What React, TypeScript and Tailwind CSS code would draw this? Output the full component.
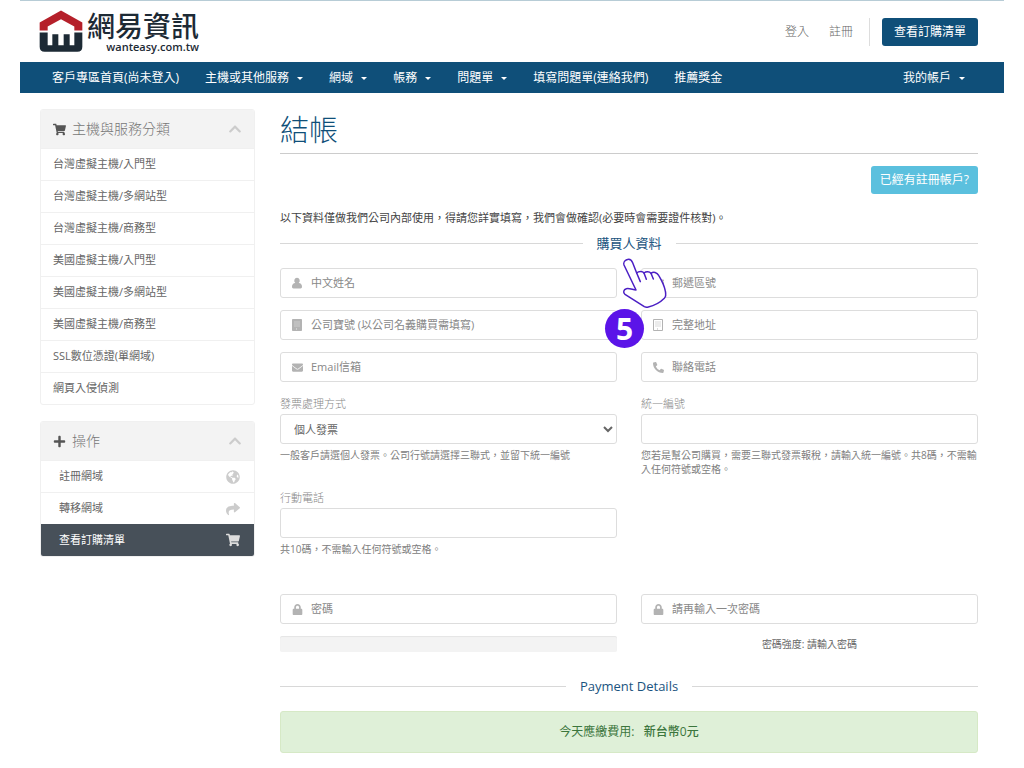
import type { ReactNode } from "react";
import {
  FaChevronUp,
  FaEnvelope,
  FaGlobeAmericas,
  FaLock,
  FaPhoneAlt,
  FaPlus,
  FaShare,
  FaShoppingCart,
} from "react-icons/fa";

const navItems = [
  { label: "客戶專區首頁(尚未登入)", menu: false },
  { label: "主機或其他服務", menu: true },
  { label: "網域", menu: true },
  { label: "帳務", menu: true },
  { label: "問題單", menu: true },
  { label: "填寫問題單(連絡我們)", menu: false },
  { label: "推薦獎金", menu: false },
];

const categories = [
  "台灣虛擬主機/入門型",
  "台灣虛擬主機/多網站型",
  "台灣虛擬主機/商務型",
  "美國虛擬主機/入門型",
  "美國虛擬主機/多網站型",
  "美國虛擬主機/商務型",
  "SSL數位憑證(單網域)",
  "網頁入侵偵測",
];

const actions = [
  { label: "註冊網域", icon: <FaGlobeAmericas />, active: false },
  { label: "轉移網域", icon: <FaShare />, active: false },
  { label: "查看訂購清單", icon: <FaShoppingCart />, active: true },
];

function UserIcon() {
  return (
    <svg viewBox="0 0 12 12" className="h-3 w-3" fill="currentColor">
      <path d="M6 .8a2.700 2.900 0 0 1 1.700 5.200c2.300.1 3.300 1.700 3.300 3.800 0 1-.6 1.600-1.500 1.600h-7c-.9 0-1.500-.6-1.500-1.600 0-2.100 1-3.700 3.300-3.800A2.700 2.900 0 0 1 6 .8z" />
    </svg>
  );
}

function BuildingIcon({ outline = false }: { outline?: boolean }) {
  return (
    <svg viewBox="0 0 12 12" className="h-3 w-3">
      <path
        d="M1.500.5h9v11h-9z"
        fill={outline ? "none" : "currentColor"}
        stroke="currentColor"
      />
      <path
        d="M3.500 3h5M3.500 5h5M3.500 7h5M5 10h2"
        stroke={outline ? "currentColor" : "#e8e8e8"}
        strokeDasharray="1 1"
      />
    </svg>
  );
}

function LogoMark() {
  return (
    <svg viewBox="0 0 132 128" className="h-[43px] w-11" aria-hidden="true">
      <path d="M2 37 66 1l64 36v24h-24V49L66 27 26 49v12H2z" fill="#b5202a" />
      <path
        d="M2 67h24v38h14V72h18v33h16V72h18v33h14V67h24v43q0 15-15 15H17q-15 0-15-15z"
        fill="#1d2a35"
      />
    </svg>
  );
}

function PointingHand() {
  return (
    <svg viewBox="60 10 144 156" className="h-[52px] w-12" aria-hidden="true">
      <path
        d="M105 109 69 34C64 20 87 8 95 27l12 31c6-6 18-6 22 0 6-5 16-5 21 1 7-6 18-3 23 6 9 15 17 31 20 47 2 9 2 17-3 22-14 14-29 22-48 26-4 1-8 1-12-1L72 122c-7-5-4-15 4-17 9-2 19 3 29 4z"
        fill="#fff"
        stroke="#4b1fc4"
        strokeWidth="4.500"
        strokeLinejoin="round"
      />
      <path
        d="m107 58 11 26M129 58l7 19M150 59l7 17"
        fill="none"
        stroke="#4b1fc4"
        strokeWidth="4.500"
        strokeLinecap="round"
      />
    </svg>
  );
}

function Caret() {
  return (
    <span className="ml-2 inline-block border-x-[3px] border-t-[3px] border-x-transparent border-t-white align-middle" />
  );
}

function PanelHeader({ icon, title }: { icon: ReactNode; title: string }) {
  return (
    <div className="flex h-[38px] items-center bg-[#f3f3f3] px-3 text-sm font-light text-[#777]">
      <span className="mr-1.5 text-[13px] text-[#555]">{icon}</span>
      <h3>{title}</h3>
      <button type="button" aria-label="收合" className="ml-auto text-[#ccc]">
        <FaChevronUp />
      </button>
    </div>
  );
}

function IconField({
  icon,
  label,
  type = "text",
}: {
  icon: ReactNode;
  label: string;
  type?: string;
}) {
  return (
    <label className="flex h-[30px] items-center gap-2 rounded-[3px] border border-[#ddd] bg-white pl-2.5">
      <span className="flex w-3 justify-center text-[11px] text-[#b3b3b3]">{icon}</span>
      <input
        type={type}
        aria-label={label}
        placeholder={label}
        className="min-w-0 flex-1 text-[11px] outline-none placeholder:text-[#888]"
      />
    </label>
  );
}

function TextField({ id, label, help }: { id: string; label: string; help: string }) {
  return (
    <div>
      <label htmlFor={id} className="block leading-5 font-light text-[#888]">
        {label}
      </label>
      <input
        id={id}
        type="text"
        className="block h-[30px] w-full rounded-[3px] border border-[#ddd] bg-white px-3"
      />
      <p className="mt-1 text-[10px] leading-[14px] text-[#808080]">{help}</p>
    </div>
  );
}

function SectionTitle({ children }: { children: ReactNode }) {
  return (
    <div className="flex items-center gap-3.5 text-[#1a5480]">
      <span className="h-px flex-1 bg-[#d8d8d8]" />
      <h2 className="text-[13px] leading-5">{children}</h2>
      <span className="h-px flex-1 bg-[#d8d8d8]" />
    </div>
  );
}

export default function App() {
  return (
    <div
      lang="zh-Hant"
      className="mx-5 min-h-screen border-t border-[#b7ccd6] bg-white font-['Open_Sans','Noto_Sans_CJK_TC',sans-serif] text-[11px] text-[#666]"
    >
      <header className="flex h-[61px] items-center justify-between pr-[26px] pl-[19px]">
        <a href="#" className="flex items-center gap-1 text-[#1d2a35]">
          <LogoMark />
          <span className="flex flex-col items-end">
            <span className="text-[28px] leading-[30px] font-medium">網易資訊</span>
            <span className="text-[11px] leading-3 font-semibold">wanteasy.com.tw</span>
          </span>
        </a>
        <div className="flex items-center text-xs font-light text-[#666]">
          <a href="#">登入</a>
          <a href="#" className="ml-5">
            註冊
          </a>
          <span className="mx-3 ml-4 h-7 w-px bg-[#ddd]" />
          <a
            href="#"
            className="rounded-[3px] bg-[#0f4f79] px-3 leading-7 font-normal text-white"
          >
            查看訂購清單
          </a>
        </div>
      </header>

      <nav className="flex h-[31px] items-center bg-[#0f4f79] pr-[26px] pl-[19px] text-xs text-white">
        {navItems.map((item) =>
          item.menu ? (
            <button key={item.label} type="button" className="px-[13px]">
              {item.label}
              <Caret />
            </button>
          ) : (
            <a key={item.label} href="#" className="px-[13px]">
              {item.label}
            </a>
          )
        )}
        <button type="button" className="ml-auto px-[13px]">
          我的帳戶
          <Caret />
        </button>
      </nav>

      <div className="flex gap-[25px] pt-4 pr-[26px] pl-5">
        <aside className="w-[215px] shrink-0 space-y-4">
          <section className="overflow-hidden rounded-[3px] border border-[#f0f0f0]">
            <PanelHeader icon={<FaShoppingCart />} title="主機與服務分類" />
            <ul>
              {categories.map((name) => (
                <li key={name} className="h-8 border-t border-[#f0f0f0] px-3 leading-[30px]">
                  <a href="#">{name}</a>
                </li>
              ))}
            </ul>
          </section>
          <section className="overflow-hidden rounded-[3px] border border-[#f0f0f0]">
            <PanelHeader icon={<FaPlus />} title="操作" />
            <ul>
              {actions.map((action) => (
                <li key={action.label}>
                  <a
                    href="#"
                    className={
                      action.active
                        ? "flex h-8 items-center justify-between bg-[#475059] pr-3.5 pl-[18px] text-white"
                        : "flex h-8 items-center justify-between border-t border-[#f0f0f0] pr-3.5 pl-[18px]"
                    }
                  >
                    {action.label}
                    <span
                      className={
                        action.active ? "text-sm text-[#ddd]" : "text-sm text-[#ccc]"
                      }
                    >
                      {action.icon}
                    </span>
                  </a>
                </li>
              ))}
            </ul>
          </section>
        </aside>

        <main className="min-w-0 flex-1">
          <h1 className="border-b border-[#ccc] pt-px pb-[3px] text-[29px] leading-10 font-light text-[#0f4f79]">
            結帳
          </h1>

          <div className="mt-3 flex justify-end">
            <button
              type="button"
              className="h-7 rounded-[3px] bg-[#5bc0de] px-[9px] text-xs text-white"
            >
              已經有註冊帳戶?
            </button>
          </div>

          <p className="mt-3.5 leading-5 text-[#444]">
            以下資料僅做我們公司內部使用，得請您詳實填寫，我們會做確認(必要時會需要證件核對)。
          </p>

          <form className="relative mt-[5px]">
            <SectionTitle>購買人資料</SectionTitle>

            <div className="mt-[15px] grid grid-cols-2 gap-x-6 gap-y-3">
              <IconField icon={<UserIcon />} label="中文姓名" />
              <IconField icon={<FaEnvelope />} label="郵遞區號" />
              <IconField icon={<BuildingIcon />} label="公司寶號 (以公司名義購買需填寫)" />
              <IconField icon={<BuildingIcon outline />} label="完整地址" />
              <IconField icon={<FaEnvelope />} label="Email信箱" type="email" />
              <IconField icon={<FaPhoneAlt />} label="聯絡電話" type="tel" />

              <div>
                <label htmlFor="invoice" className="block leading-5 font-light text-[#888]">
                  發票處理方式
                </label>
                <select
                  id="invoice"
                  className="block h-[30px] w-full rounded-[3px] border border-[#ddd] bg-white pl-[9px]"
                >
                  <option>個人發票</option>
                  <option>公司行號</option>
                </select>
                <p className="mt-1 text-[10px] leading-[14px] text-[#808080]">
                  一般客戶請選個人發票。公司行號請選擇三聯式，並留下統一編號
                </p>
              </div>
              <TextField
                id="tax-id"
                label="統一編號"
                help="您若是幫公司購買，需要三聯式發票報稅，請輸入統一編號。共8碼，不需輸入任何符號或空格。"
              />
              <TextField
                id="mobile"
                label="行動電話"
                help="共10碼，不需輸入任何符號或空格。"
              />
            </div>

            <div className="mt-[38px] grid grid-cols-2 gap-x-6 gap-y-3">
              <IconField icon={<FaLock />} label="密碼" type="password" />
              <IconField icon={<FaLock />} label="請再輸入一次密碼" type="password" />
              <div className="h-4 rounded-[2px] bg-[#f3f3f3] shadow-[inset_0_1px_1px_rgba(0,0,0,0.06)]" />
              <p className="text-center text-[10px] leading-4">密碼強度: 請輸入密碼</p>
            </div>

            {/* step marker */}
            <div className="pointer-events-none absolute top-6 left-1/2 -ml-2">
              <PointingHand />
            </div>
            <div className="pointer-events-none absolute top-[76px] left-1/2 -ml-6 flex h-[39px] w-[39px] items-center justify-center rounded-full bg-[#5b14e8] text-[30px] leading-none font-bold text-white">
              5
            </div>

            <div className="mt-6">
              <SectionTitle>Payment Details</SectionTitle>
            </div>
            <p className="mt-[15px] rounded-[3px] border border-[#d6e9c6] bg-[#dff0d8] text-center text-xs leading-10 text-[#3c763d]">
              今天應繳費用: &nbsp; <strong className="font-medium">新台幣0元</strong>
            </p>
          </form>
        </main>
      </div>
    </div>
  );
}
